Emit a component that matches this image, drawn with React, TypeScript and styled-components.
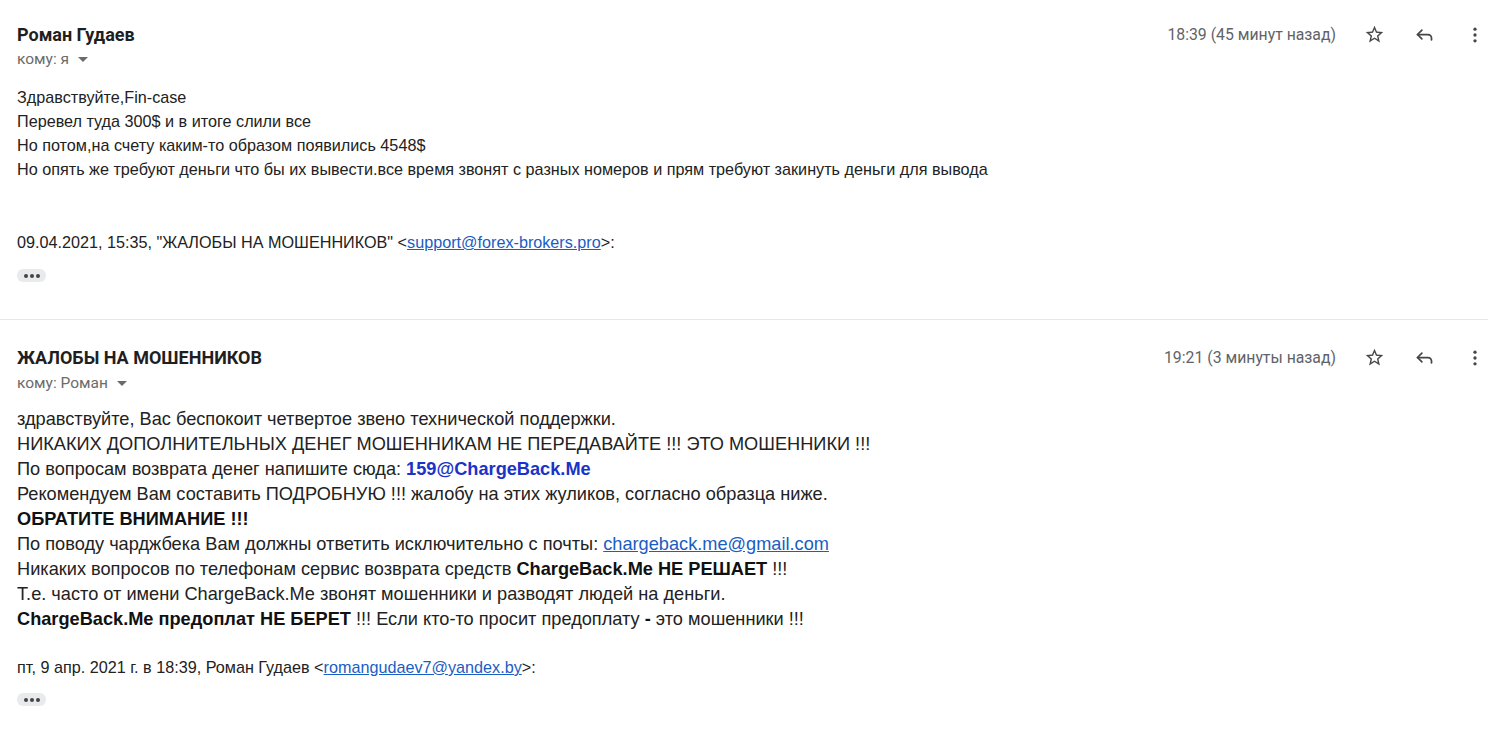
import * as React from 'react'
import styled, { createGlobalStyle } from 'styled-components'

const GlobalStyle = createGlobalStyle`
    body {
        margin: 0;
        background: #fff;
        font-family: Roboto, 'Liberation Sans', Arial, sans-serif;
    }
`

const StarIcon = () => (
    <svg width='21' height='21' viewBox='0 0 24 24' fill='#444746'>
        <path d='M22 9.24l-7.19-.62L12 2 9.19 8.63 2 9.24l5.46 4.73L5.82 21 12 17.27 18.18 21l-1.63-7.03L22 9.24zM12 15.4l-3.76 2.27 1-4.28-3.32-2.88 4.38-.38L12 6.1l1.71 4.04 4.38.38-3.32 2.88 1 4.28L12 15.4z' />
    </svg>
)

const ReplyIcon = () => (
    <svg width='21' height='21' viewBox='0 0 24 24' fill='none' stroke='#444746' strokeWidth='2' strokeLinecap='round' strokeLinejoin='round'>
        <polyline points='9 17 4 12 9 7' />
        <path d='M20 18v-2a4 4 0 0 0-4-4H4' />
    </svg>
)

const MoreIcon = () => (
    <svg width='20' height='20' viewBox='0 0 24 24' fill='#444746'>
        <circle cx='12' cy='5' r='2' />
        <circle cx='12' cy='12' r='2' />
        <circle cx='12' cy='19' r='2' />
    </svg>
)

interface IHeaderProps {
    sender: string
    to: string
    time: string
    toGap: number
}

const MessageHeader = ({ sender, to, time, toGap }: IHeaderProps) => (
    <Header>
        <div>
            <Sender>{sender}</Sender>
            <Recipient gap={toGap}>кому: {to} <Caret /></Recipient>
        </div>
        <Actions>
            <Time>{time}</Time>
            <IconBtn><StarIcon /></IconBtn>
            <IconBtn><ReplyIcon /></IconBtn>
            <IconBtn><MoreIcon /></IconBtn>
        </Actions>
    </Header>
)

export default function App() {
    return (
        <Page>
            <GlobalStyle />
            <Message top={24} bottom={37}>
                <MessageHeader sender='Роман Гудаев' to='я' time='18:39 (45 минут назад)' toGap={3} />
                <Body small gap={16}>
                    <div>Здравствуйте,Fin-case</div>
                    <div>Перевел туда 300$ и в итоге слили все</div>
                    <div>Но потом,на счету каким-то образом появились 4548$</div>
                    <div>Но опять же требуют деньги что бы их вывести.все время звонят с разных номеров и прям требуют закинуть деньги для вывода</div>
                </Body>
                <Quote gap={49}>
                    09.04.2021, 15:35, "ЖАЛОБЫ НА МОШЕННИКОВ" &lt;<Link href='#'>support@forex-brokers.pro</Link>&gt;:
                </Quote>
                <Dots gap={15}><span /><span /><span /></Dots>
            </Message>
            <Divider />
            <Message top={27} bottom={30}>
                <MessageHeader sender='ЖАЛОБЫ НА МОШЕННИКОВ' to='Роман' time='19:21 (3 минуты назад)' toGap={4} />
                <Body gap={14}>
                    <div>здравствуйте, Вас беспокоит четвертое звено технической поддержки.</div>
                    <div>НИКАКИХ ДОПОЛНИТЕЛЬНЫХ ДЕНЕГ МОШЕННИКАМ НЕ ПЕРЕДАВАЙТЕ !!! ЭТО МОШЕННИКИ !!!</div>
                    <div>По вопросам возврата денег напишите сюда: <Strong blue>159@ChargeBack.Me</Strong></div>
                    <div>Рекомендуем Вам составить ПОДРОБНУЮ !!! жалобу на этих жуликов, согласно образца ниже.</div>
                    <div><Strong>ОБРАТИТЕ ВНИМАНИЕ !!!</Strong></div>
                    <div>По поводу чарджбека Вам должны ответить исключительно с почты: <Link href='#'>chargeback.me@gmail.com</Link></div>
                    <div>Никаких вопросов по телефонам сервис возврата средств <Strong>ChargeBack.Me НЕ РЕШАЕТ</Strong> !!!</div>
                    <div>Т.е. часто от имени ChargeBack.Me звонят мошенники и разводят людей на деньги.</div>
                    <div><Strong>ChargeBack.Me предоплат НЕ БЕРЕТ</Strong> !!! Если кто-то просит предоплату <Strong>-</Strong> это мошенники !!!</div>
                </Body>
                <Quote gap={23}>
                    пт, 9 апр. 2021 г. в 18:39, Роман Гудаев &lt;<Link href='#'>romangudaev7@yandex.by</Link>&gt;:
                </Quote>
                <Dots gap={14}><span /><span /><span /></Dots>
            </Message>
        </Page>
    )
}

const Page = styled.div`
    width: 1488px;
`

const Message = styled.div<{ top: number, bottom: number }>`
    padding: ${p => p.top}px 3px ${p => p.bottom}px 17px;
`

const Header = styled.div`
    display: flex;
    justify-content: space-between;
    align-items: flex-start;
`

const Sender = styled.div`
    font-size: 18px;
    font-weight: 700;
    line-height: 22px;
    color: #1f1f1f;
`

const Recipient = styled.div<{ gap: number }>`
    display: flex;
    align-items: center;
    gap: 8px;
    margin-top: ${p => p.gap}px;
    font-size: 15.5px;
    line-height: 20px;
    color: #6b6b6b;
`

const Caret = styled.span`
    width: 0;
    height: 0;
    border-left: 5px solid transparent;
    border-right: 5px solid transparent;
    border-top: 5px solid #6b6b6b;
    margin-left: 1px;
`

const Actions = styled.div`
    display: flex;
    align-items: center;
    gap: 29px;
`

const Time = styled.span`
    font-size: 15.8px;
    line-height: 20px;
    color: #5f6368;
    margin-right: -1px;
`

const IconBtn = styled.span`
    display: flex;
    width: 21px;
    height: 21px;
    align-items: center;
    justify-content: center;
`

const Body = styled.div<{ small?: boolean, gap: number }>`
    margin-top: ${p => p.gap}px;
    font-family: 'Liberation Sans', Arial, sans-serif;
    font-size: ${p => p.small ? '16.2px' : '18.2px'};
    line-height: ${p => p.small ? '24px' : '25px'};
    color: #222;
`

const Quote = styled.div<{ gap: number }>`
    margin-top: ${p => p.gap}px;
    font-family: 'Liberation Sans', Arial, sans-serif;
    font-size: 16.2px;
    line-height: 24px;
    color: #222;
`

const Link = styled.a`
    color: #1a5dc4;
    text-decoration: underline;
`

const Strong = styled.b<{ blue?: boolean }>`
    font-weight: 700;
    color: ${p => p.blue ? '#1a33c8' : '#111'};
`

const Dots = styled.div<{ gap: number }>`
    display: flex;
    gap: 2px;
    align-items: center;
    justify-content: center;
    width: 29px;
    height: 13px;
    margin-top: ${p => p.gap}px;
    border-radius: 6px;
    background: #e8eaed;

    span {
        width: 4px;
        height: 4px;
        border-radius: 50%;
        background: #444;
    }
`

const Divider = styled.div`
    height: 1px;
    background: #e8e8e8;
`
